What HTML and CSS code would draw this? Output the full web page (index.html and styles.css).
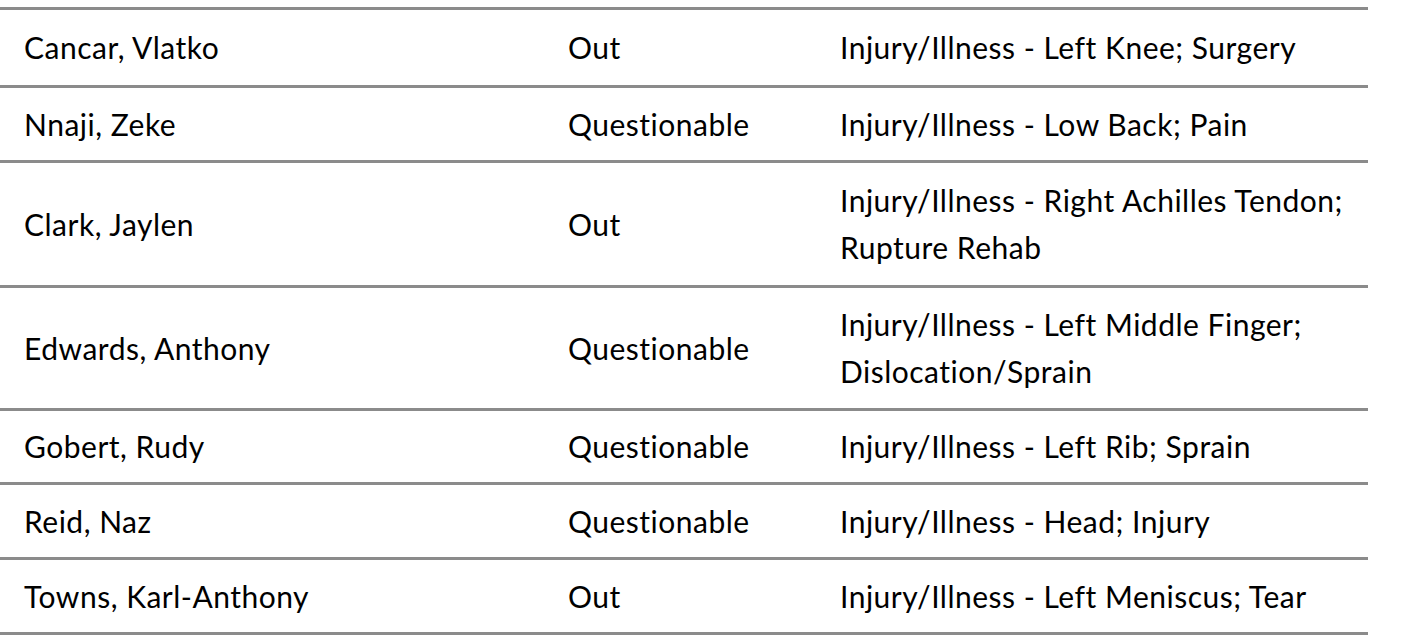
FILE: index.html
```html
<!DOCTYPE html>
<html lang="en">
<head>
<meta charset="utf-8">
<title>Injury Report</title>
<link rel="stylesheet" href="styles.css">
</head>
<body>
<table class="report">
  <colgroup>
    <col class="c-name"><col class="c-status"><col class="c-reason">
  </colgroup>
  <tbody>
    <tr class="r-first"><td>Cancar, Vlatko</td><td>Out</td><td>Injury/Illness - Left Knee; Surgery</td></tr>
    <tr class="r-single"><td>Nnaji, Zeke</td><td>Questionable</td><td>Injury/Illness - Low Back; Pain</td></tr>
    <tr class="r-double"><td>Clark, Jaylen</td><td>Out</td><td>Injury/Illness - Right Achilles Tendon;<br>Rupture Rehab</td></tr>
    <tr class="r-double2"><td>Edwards, Anthony</td><td>Questionable</td><td>Injury/Illness - Left Middle Finger;<br>Dislocation/Sprain</td></tr>
    <tr class="r-short"><td>Gobert, Rudy</td><td>Questionable</td><td>Injury/Illness - Left Rib; Sprain</td></tr>
    <tr class="r-single"><td>Reid, Naz</td><td>Questionable</td><td>Injury/Illness - Head; Injury</td></tr>
    <tr class="r-single"><td>Towns, Karl-Anthony</td><td>Out</td><td>Injury/Illness - Left Meniscus; Tear</td></tr>
  </tbody>
</table>
</body>
</html>
```
FILE: styles.css
```css
html, body {
  margin: 0;
  padding: 0;
  background: #ffffff;
}
body {
  padding-top: 7px;
  font-family: "Lato", "Liberation Sans", sans-serif;
  color: #000000;
}
.report {
  border-collapse: collapse;
  width: 1368px;
  table-layout: fixed;
  border-top: 3px solid #8b8b8b;
}
.c-name { width: 544px; }
.c-status { width: 272px; }
.c-reason { width: 552px; }
.report td {
  padding: 0 0 0 24px;
  vertical-align: middle;
  font-size: 30px;
  letter-spacing: 0.5px;
  line-height: 47px;
  white-space: nowrap;
  border-bottom: 3px solid #8b8b8b;
}
.r-first td { height: 75px; }
.r-single td { height: 72px; }
.r-short td { height: 71px; }
.r-double td { height: 122px; }
.r-double2 td { height: 120px; }
```
